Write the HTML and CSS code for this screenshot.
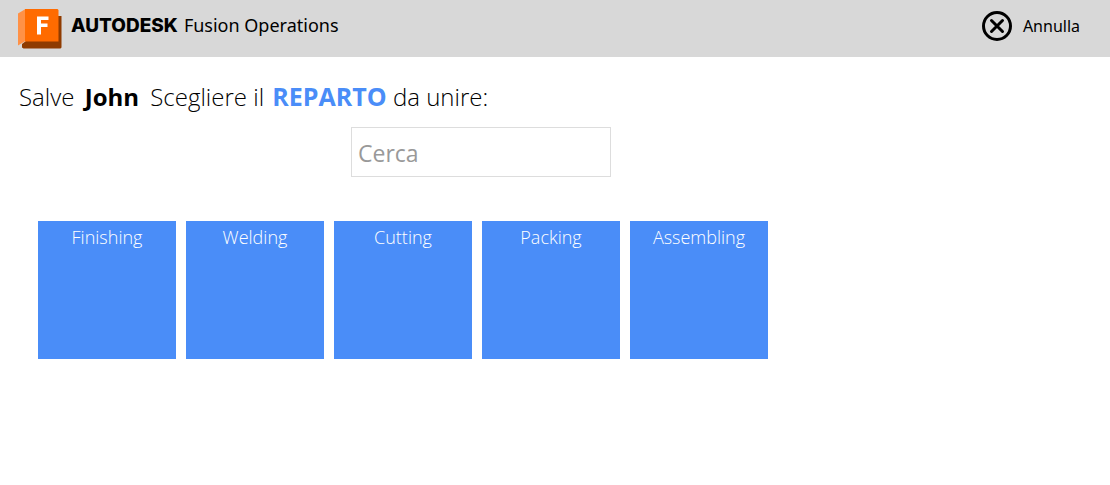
FILE: index.html
```html
<!DOCTYPE html>
<html lang="it">
<head>
<meta charset="utf-8">
<title>Autodesk Fusion Operations</title>
<link rel="stylesheet" href="styles.css">
</head>
<body>
<header class="topbar">
  <div class="brand">
    <svg class="logo" width="44" height="40" viewBox="0 0 44 40" aria-hidden="true">
      <path d="M0 4.5L7.5 0V32L0 36.5Z" fill="#ff9146"/>
      <path d="M40 7H43.5V38.5L42.5 39.5H5.5L4 38.5V35L8 32H40Z" fill="#8f3b00"/>
      <path d="M7 0H39.5L40.5 1V32.5H7Z" fill="#ff6b00"/>
      <path d="M19 7.5H30.5V11H23V14.5H29.5V18H23V25.5H19Z" fill="#fff"/>
    </svg>
    <span class="maker">AUTODESK</span>
    <span class="product">Fusion Operations</span>
  </div>
  <button class="cancel" type="button">
    <svg width="30" height="30" viewBox="0 0 30 30" fill="none" stroke="#000" stroke-width="3" stroke-linecap="round" aria-hidden="true">
      <circle cx="15" cy="15" r="13.5"/><path d="M9.5 9.5L20.5 20.5M20.5 9.5L9.5 20.5"/>
    </svg>
    <span>Annulla</span>
  </button>
</header>
<main>
  <h1 class="greeting">Salve <b class="user">John</b> Scegliere il <b class="accent">REPARTO</b> da unire:</h1>
  <div class="search"><input type="text" placeholder="Cerca" aria-label="Cerca"></div>
  <div class="tiles">
    <button type="button">Finishing</button>
    <button type="button">Welding</button>
    <button type="button">Cutting</button>
    <button type="button">Packing</button>
    <button type="button">Assembling</button>
  </div>
</main>
</body>
</html>
```
FILE: styles.css
```css
body { margin: 0; background: #fff; color: #000; font-family: "Open Sans", sans-serif; }
.topbar { display: flex; justify-content: space-between; align-items: center; height: 57px; padding: 0 30px 0 18px; box-sizing: border-box; background: #d8d8d8; }
.brand { display: flex; align-items: center; padding-bottom: 7px; }
.logo { margin: 8px 9px 0 0; }
.maker { font: 800 19px Inter, sans-serif; margin-right: 6px; }
.product { font: 400 18px "Noto Sans", sans-serif; }
.cancel { display: flex; align-items: center; gap: 11px; padding: 0 0 5px; border: 0; background: none; font: 16px "Noto Sans", sans-serif; color: #000; }
.greeting { margin: 22px 19px 12px; font-size: 24px; line-height: 36px; font-weight: 300; }
.user { margin: 0 5px 0 4px; font-weight: 700; }
.accent { margin-left: 2px; color: #4a8df8; font-size: 25px; line-height: 24px; font-weight: 700; }
.search { display: flex; padding-left: 351px; }
.search input { box-sizing: border-box; width: 260px; height: 50px; padding: 2px 6px 0; border: 1px solid #ddd; font: 23px "Open Sans", sans-serif; }
.search input::placeholder { color: #999; }
.tiles { display: flex; flex-wrap: wrap; gap: 10px; padding: 44px 38px; }
.tiles button { display: flex; justify-content: center; align-items: flex-start; width: 138px; height: 138px; padding: 4px; border: 0; background: #4a8df8; color: #fff; font: 300 18px/25px "Open Sans", sans-serif; }
```
